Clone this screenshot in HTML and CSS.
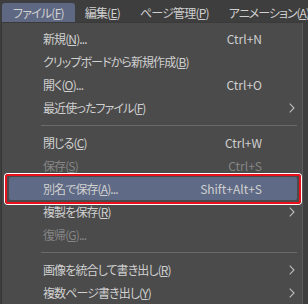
FILE: index.html
```html
<!DOCTYPE html>
<html lang="ja">
<head>
<meta charset="utf-8">
<link rel="stylesheet" href="styles.css">
</head>
<body>
<div class="menubar">
  <div class="tab active">ファイル(<u>F</u>)</div>
  <div class="tab">編集(<u>E</u>)</div>
  <div class="tab">ページ管理(<u>P</u>)</div>
  <div class="tab last">アニメーション(<u>A</u>)</div>
</div>
<div class="dropdown">
  <div class="row"><span class="label">新規(<u>N</u>)...</span><span class="key">Ctrl+N</span><span class="arrow"></span></div>
  <div class="row"><span class="label">クリップボードから新規作成(<u>B</u>)</span><span class="key"></span><span class="arrow"></span></div>
  <div class="row"><span class="label">開く(<u>O</u>)...</span><span class="key">Ctrl+O</span><span class="arrow"></span></div>
  <div class="row"><span class="label">最近使ったファイル(<u>F</u>)</span><span class="key"></span><span class="arrow"><svg width="6" height="10" viewBox="0 0 6 10"><path d="M0.7 0.7 L5 5 L0.7 9.3" fill="none" stroke="#bdbdbd" stroke-width="1.1"/></svg></span></div>
  <div class="sep"></div>
  <div class="row"><span class="label">閉じる(<u>C</u>)</span><span class="key">Ctrl+W</span><span class="arrow"></span></div>
  <div class="row disabled"><span class="label">保存(<u>S</u>)</span><span class="key">Ctrl+S</span><span class="arrow"></span></div>
  <div class="row hover"><span class="label">別名で保存(<u>A</u>)...</span><span class="key">Shift+Alt+S</span><span class="arrow"></span><span class="annot"></span></div>
  <div class="row"><span class="label">複製を保存(<u>R</u>)</span><span class="key"></span><span class="arrow"><svg width="6" height="10" viewBox="0 0 6 10"><path d="M0.7 0.7 L5 5 L0.7 9.3" fill="none" stroke="#bdbdbd" stroke-width="1.1"/></svg></span></div>
  <div class="row disabled"><span class="label">復帰(<u>G</u>)...</span><span class="key"></span><span class="arrow"></span></div>
  <div class="sep"></div>
  <div class="row"><span class="label">画像を統合して書き出し(<u>R</u>)</span><span class="key"></span><span class="arrow"><svg width="6" height="10" viewBox="0 0 6 10"><path d="M0.7 0.7 L5 5 L0.7 9.3" fill="none" stroke="#bdbdbd" stroke-width="1.1"/></svg></span></div>
  <div class="row"><span class="label">複数ページ書き出し(<u>Y</u>)</span><span class="key"></span><span class="arrow"><svg width="6" height="10" viewBox="0 0 6 10"><path d="M0.7 0.7 L5 5 L0.7 9.3" fill="none" stroke="#bdbdbd" stroke-width="1.1"/></svg></span></div>
</div>
</body>
</html>
```
FILE: styles.css
```css
html, body {
  margin: 0;
  padding: 0;
  background: #3e3e3e;
  width: 308px;
  height: 304px;
  overflow: hidden;
  font-family: "Noto Sans CJK JP", "Noto Sans", sans-serif;
  font-size: 12px;
  color: #d0d0d0;
  font-feature-settings: "palt";
}
u {
  text-decoration: underline;
  text-underline-offset: 1px;
}
.menubar {
  display: flex;
  height: 22px;
  padding-left: 2px;
  align-items: flex-end;
  letter-spacing: -0.8px;
}
.tab {
  height: 19px;
  line-height: 19px;
  padding: 0 10px;
  border-radius: 3px 3px 0 0;
  white-space: nowrap;
  flex-shrink: 0;
}
.tab.active {
  background: #5e6883;
  padding: 0 11px;
}
.tab.last {
  padding-right: 0;
  letter-spacing: -1px;
}
.dropdown {
  margin-left: 1px;
  width: 302px;
  height: 282px;
  background: #4b4b4b;
  border-left: 1px solid #363636;
  border-right: 1px solid #5a5a5a;
  border-top: 1px solid #3a3a3a;
  padding-top: 4px;
  box-sizing: border-box;
}
.row {
  position: relative;
  display: grid;
  grid-template-columns: 1fr auto 35px;
  align-items: center;
  height: 23px;
  margin: 0 5px 0 7px;
  padding-left: 34px;
  white-space: nowrap;
  border-radius: 2px;
}
.label {
  letter-spacing: -0.9px;
}
.row.disabled {
  color: #868686;
}
.row.hover {
  background: #5f6a86;
}
.key {
  text-align: right;
}
.arrow {
  display: flex;
  justify-content: flex-end;
  padding-right: 2px;
}
.annot {
  position: absolute;
  left: -4px;
  right: -4px;
  top: -3px;
  bottom: -4px;
  border: 2px solid #e8101a;
  border-radius: 3px;
  box-shadow: 0 0 0 1px #ffffff;
}
.sep {
  height: 12px;
  display: flex;
  align-items: center;
  margin: 0 5px 0 39px;
}
.sep::before {
  content: "";
  flex: 1;
  height: 1px;
  background: #6a6a6a;
}
```
